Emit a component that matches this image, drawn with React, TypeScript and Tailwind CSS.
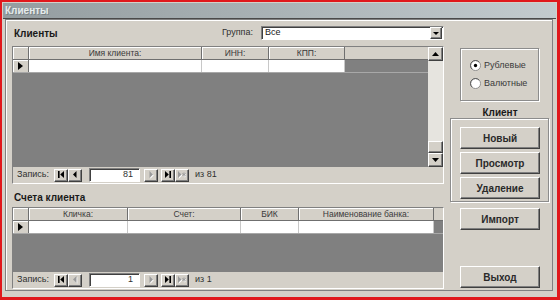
import React from "react";

const raised =
  "border border-t-white border-l-white border-r-[#404040] border-b-[#404040] shadow-[inset_-1px_-1px_0_#808080] bg-[#d4d0c8]";
const sunken =
  "border border-t-[#808080] border-l-[#808080] border-r-white border-b-white shadow-[inset_1px_1px_0_#404040]";
const etched =
  "border border-[#8c8c8c] shadow-[inset_1px_1px_0_#fff,1px_1px_0_#fff]";

type Glyph = "first" | "prev" | "next" | "last" | "new";

function GlyphShape({ kind, fill }: { kind: Glyph; fill: string }) {
  if (kind === "first")
    return (
      <>
        <rect x="1" y="0" width="1.6" height="7" fill={fill} />
        <polygon points="7,0 3.2,3.5 7,7" fill={fill} />
      </>
    );
  if (kind === "prev") return <polygon points="5.5,0 2,3.5 5.5,7" fill={fill} />;
  if (kind === "next") return <polygon points="2.5,0 6,3.5 2.5,7" fill={fill} />;
  if (kind === "last")
    return (
      <>
        <polygon points="1,0 4.8,3.5 1,7" fill={fill} />
        <rect x="5.4" y="0" width="1.6" height="7" fill={fill} />
      </>
    );
  return (
    <>
      <polygon points="0,0 3.6,3.5 0,7" fill={fill} />
      <path d="M6 1.5v4M4.3 2.5l3.4 2M4.3 4.5l3.4-2" stroke={fill} strokeWidth="0.9" />
    </>
  );
}

function NavButton({ kind, disabled }: { kind: Glyph; disabled?: boolean }) {
  return (
    <div className={`w-[14px] h-[13px] flex items-center justify-center ${raised}`}>
      <svg width="8" height="8" viewBox="0 0 8 8">
        {disabled && (
          <g transform="translate(0.8,0.8)">
            <GlyphShape kind={kind} fill="#ffffff" />
          </g>
        )}
        <GlyphShape kind={kind} fill={disabled ? "#9a9a9a" : "#000"} />
      </svg>
    </div>
  );
}

function NavBar({ current, total, prevDisabled }: { current: number; total: number; prevDisabled?: boolean }) {
  return (
    <div className="h-[16px] flex items-center bg-[#d4d0c8] pl-[4px] text-[9px] text-[#303030]">
      <span className="w-[37px]">Запись:</span>
      <NavButton kind="first" />
      <NavButton kind="prev" disabled={prevDisabled} />
      <div className={`ml-[7px] w-[51px] h-[14px] bg-white flex items-center justify-end pr-[6px] ${sunken}`}>
        {current}
      </div>
      <div className="ml-[4px]">
        <NavButton kind="next" disabled />
      </div>
      <div className="ml-[3px] flex">
        <NavButton kind="last" />
        <NavButton kind="new" disabled />
      </div>
      <span className="ml-[6px]">из {total}</span>
    </div>
  );
}

function HeaderCell({ w, label }: { w: number; label: string }) {
  return (
    <div
      className="h-full flex items-center justify-center border-r border-[#6f6f6f] shadow-[inset_1px_1px_0_#fff] text-[8.5px] text-[#3a3a3a] whitespace-nowrap overflow-hidden"
      style={{ width: w }}
    >
      {label}
    </div>
  );
}

function Datasheet({ cols }: { cols: { w: number; label: string }[] }) {
  return (
    <div className="flex flex-col">
      <div className="flex h-[13px] bg-[#d4d0c8] border-b border-[#6f6f6f]">
        <div className="w-[16px] h-full border-r border-[#6f6f6f] shadow-[inset_1px_1px_0_#fff]" />
        {cols.map((c) => (
          <HeaderCell key={c.label} w={c.w} label={c.label} />
        ))}
      </div>
      <div className="flex h-[13px] border-b border-[#a8a8a8]">
        <div className="w-[16px] h-full flex items-center justify-center bg-[#d4d0c8] border-r border-[#6f6f6f] shadow-[inset_1px_1px_0_#fff]">
          <svg width="5" height="8" viewBox="0 0 5 8">
            <polygon points="0,0 5,4 0,8" fill="#000" />
          </svg>
        </div>
        {cols.map((c) => (
          <div key={c.label} className="h-full bg-white border-r border-[#c8c8c8]" style={{ width: c.w }} />
        ))}
      </div>
    </div>
  );
}

function ScrollArrow({ up }: { up?: boolean }) {
  return (
    <div className={`w-[15px] h-[14px] flex items-center justify-center ${raised}`}>
      <svg width="7" height="4" viewBox="0 0 7 4">
        <polygon points={up ? "0,4 3.5,0 7,4" : "0,0 3.5,4 7,0"} fill="#000" />
      </svg>
    </div>
  );
}

function Radio({ checked, label }: { checked?: boolean; label: string }) {
  return (
    <div className="flex items-center gap-[3px] text-[9px] text-[#3a3a3a]">
      <svg width="11" height="11" viewBox="0 0 12 12">
        <circle cx="6" cy="6" r="5.5" fill="#fff" stroke="#8a8a8a" />
        <path d="M2.2 9.8A5.2 5.2 0 0 1 9.8 2.2" stroke="#505050" fill="none" />
        {checked && <circle cx="6" cy="6" r="1.8" fill="#000" />}
      </svg>
      <span>{label}</span>
    </div>
  );
}

function Button({ label, className = "" }: { label: string; className?: string }) {
  return (
    <div
      className={`w-[80px] h-[22px] flex items-center justify-center text-[10px] font-bold text-[#2a2a2a] ${raised} ${className}`}
    >
      {label}
    </div>
  );
}

export default function App() {
  return (
    <div className="w-[560px] h-[300px] border-l-2 border-t-2 border-r-[3px] border-b-[3px] border-[#e0181c] bg-[#d4d0c8] font-['Liberation_Sans',Arial,sans-serif] flex flex-col">
      <div className="pt-[1px] px-[1px]">
        <div className="h-[16px] flex items-center pl-[2px] bg-gradient-to-r from-[#949da0] via-[#aab3b6] to-[#c3cbce] text-[10px] font-bold text-[#e6ecec] [text-shadow:1px_1px_0_#7a8386] border-b border-[#4a4a4a]">
          Клиенты
        </div>
      </div>

      <div className="flex-1 pl-[3px] pr-[4px] pb-[5px] flex flex-col">
        <div className="h-[272px] border border-[#808080] shadow-[inset_1px_1px_0_#fff] flex pl-[6px]">
          {/* left column */}
          <div className="w-[432px] flex flex-col pt-[6px]">
            <div className="h-[14px] flex items-center justify-between">
              <span className="pl-[2px] text-[10px] font-bold text-[#1a1a1a]">Клиенты</span>
              <div className="flex items-center">
                <span className="text-[9px] text-[#303030] mr-[8px]">Группа:</span>
                <div className={`w-[183px] h-[14px] bg-white flex items-center justify-between ${sunken}`}>
                  <span className="pl-[3px] text-[9px] text-[#202020]">Все</span>
                  <div className={`w-[12px] h-[12px] mr-[1px] flex items-center justify-center ${raised}`}>
                    <svg width="6" height="3" viewBox="0 0 6 3">
                      <polygon points="0,0 3,3 6,0" fill="#000" />
                    </svg>
                  </div>
                </div>
              </div>
            </div>

            <div className={`mt-[6px] h-[138px] flex flex-col ${sunken}`}>
              <div className="flex-1 flex bg-[#808080]">
                <div className="flex-1">
                  <Datasheet
                    cols={[
                      { w: 173, label: "Имя клиента:" },
                      { w: 67, label: "ИНН:" },
                      { w: 76, label: "КПП:" },
                    ]}
                  />
                </div>
                <div className="w-[15px] flex flex-col bg-[#e6e4df]">
                  <ScrollArrow up />
                  <div className="flex-1" />
                  <div className={`h-[12px] ${raised}`} />
                  <ScrollArrow />
                </div>
              </div>
              <NavBar current={81} total={81} />
            </div>

            <div className="mt-[6px] h-[14px] flex items-center pl-[2px] text-[10px] font-bold text-[#1a1a1a]">
              Счета клиента
            </div>

            <div className={`mt-[3px] h-[82px] flex flex-col ${sunken}`}>
              <div className="flex-1 bg-[#808080]">
                <Datasheet
                  cols={[
                    { w: 99, label: "Кличка:" },
                    { w: 113, label: "Счет:" },
                    { w: 58, label: "БИК" },
                    { w: 135, label: "Наименование банка:" },
                  ]}
                />
              </div>
              <NavBar current={1} total={1} prevDisabled />
            </div>
          </div>

          {/* right column */}
          <div className="ml-[6px] w-[100px] flex flex-col">
            <div className={`ml-[10px] mt-[28px] w-[79px] h-[53px] flex flex-col justify-center gap-[5px] pl-[9px] ${etched}`}>
              <Radio checked label="Рублевые" />
              <Radio label="Валютные" />
            </div>
            <div className="mt-[6px] h-[11px] flex items-center justify-center text-[10px] font-bold text-[#1a1a1a]">
              Клиент
            </div>
            <div className={`w-[99px] h-[84px] flex flex-col gap-[3px] pt-[8px] pl-[9px] ${etched}`}>
              <Button label="Новый" />
              <Button label="Просмотр" />
              <Button label="Удаление" />
            </div>
            <Button label="Импорт" className="ml-[10px] mt-[6px]" />
            <Button label="Выход" className="ml-[10px] mt-[36px]" />
          </div>
        </div>
      </div>
    </div>
  );
}
